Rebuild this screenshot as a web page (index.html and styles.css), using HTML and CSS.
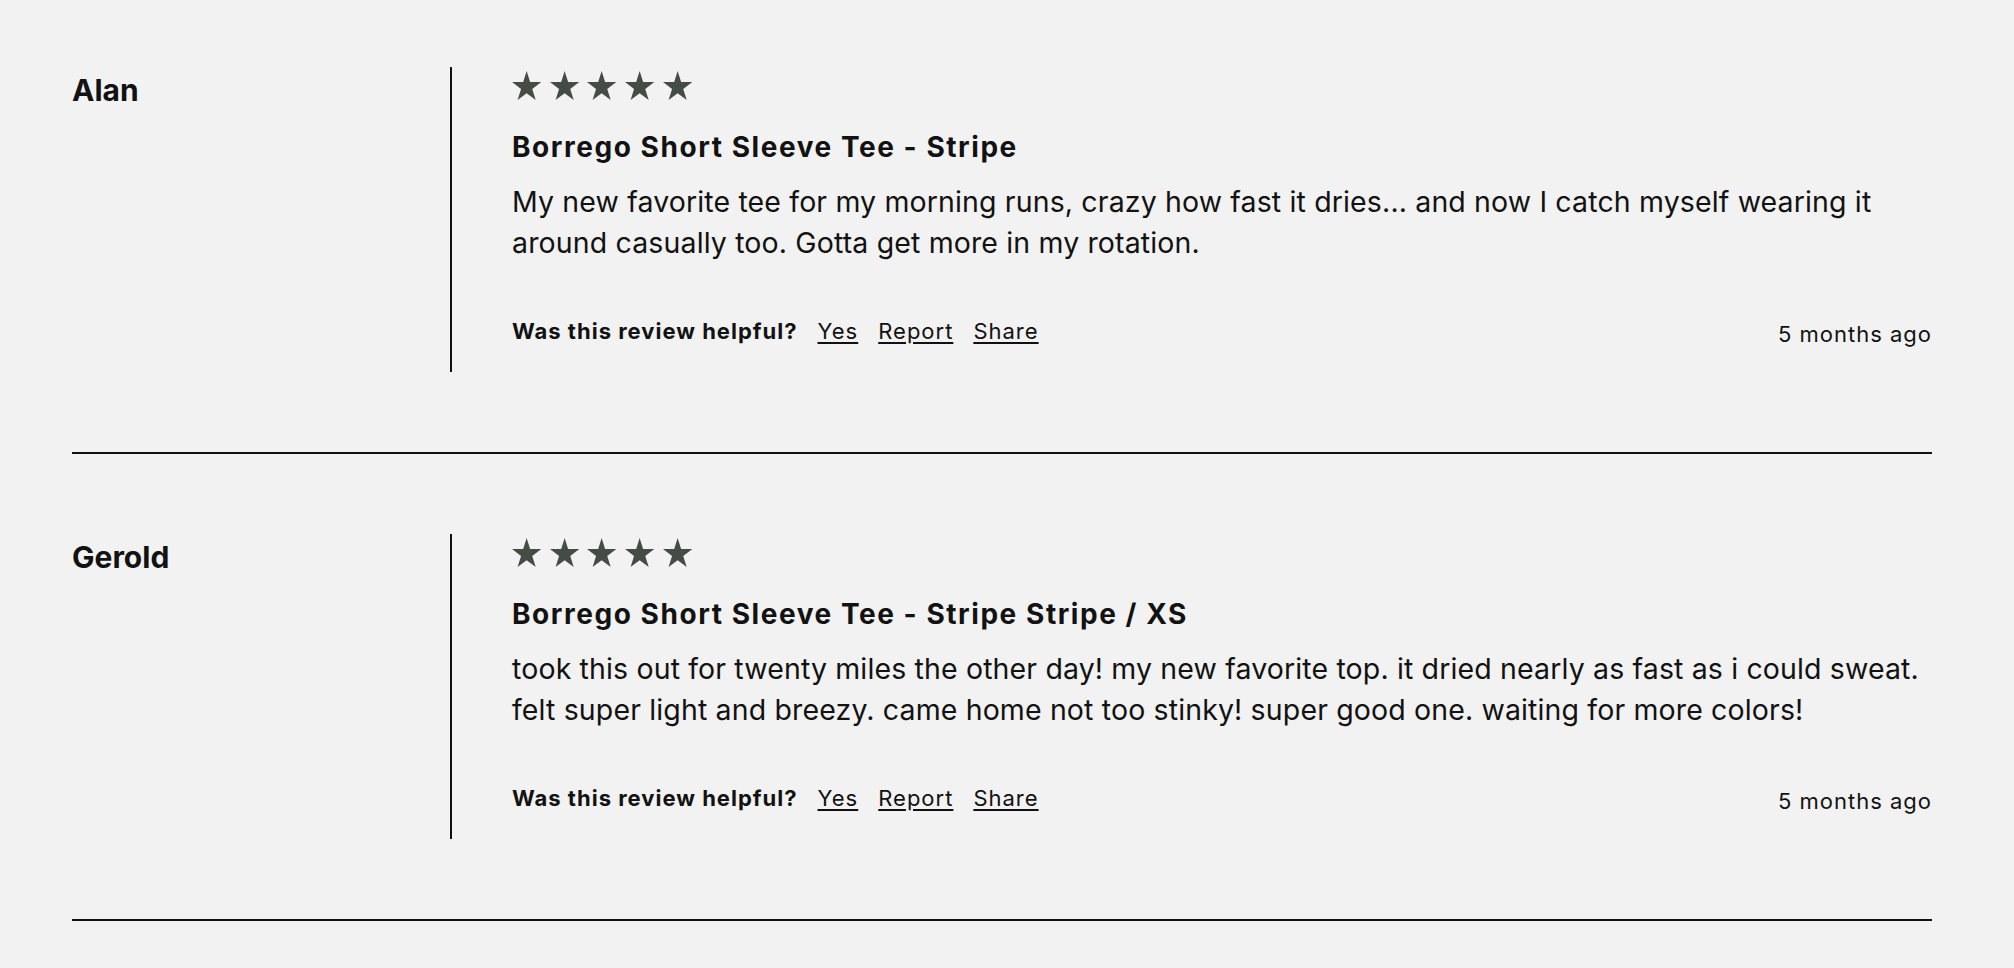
FILE: index.html
```html
<!DOCTYPE html>
<html lang="en">
<head>
<meta charset="utf-8">
<title>Reviews</title>
<link rel="stylesheet" href="styles.css">
</head>
<body>
<main class="reviews">
  <article class="review">
    <div class="author">Alan</div>
    <div class="content">
      <div class="stars" aria-label="5 out of 5 stars">
        <svg class="star" viewBox="0 0 100 95.1" preserveAspectRatio="none"><polygon points="50,0 61.8,36.3 100,36.3 69.1,58.8 80.9,95.1 50,72.7 19.1,95.1 30.9,58.8 0,36.3 38.2,36.3"/></svg>
        <svg class="star" viewBox="0 0 100 95.1" preserveAspectRatio="none"><polygon points="50,0 61.8,36.3 100,36.3 69.1,58.8 80.9,95.1 50,72.7 19.1,95.1 30.9,58.8 0,36.3 38.2,36.3"/></svg>
        <svg class="star" viewBox="0 0 100 95.1" preserveAspectRatio="none"><polygon points="50,0 61.8,36.3 100,36.3 69.1,58.8 80.9,95.1 50,72.7 19.1,95.1 30.9,58.8 0,36.3 38.2,36.3"/></svg>
        <svg class="star" viewBox="0 0 100 95.1" preserveAspectRatio="none"><polygon points="50,0 61.8,36.3 100,36.3 69.1,58.8 80.9,95.1 50,72.7 19.1,95.1 30.9,58.8 0,36.3 38.2,36.3"/></svg>
        <svg class="star" viewBox="0 0 100 95.1" preserveAspectRatio="none"><polygon points="50,0 61.8,36.3 100,36.3 69.1,58.8 80.9,95.1 50,72.7 19.1,95.1 30.9,58.8 0,36.3 38.2,36.3"/></svg>
      </div>
      <h3 class="title">Borrego Short Sleeve Tee - Stripe</h3>
      <p class="body">My new favorite tee for my morning runs, crazy how fast it dries... and now I catch myself wearing it around casually too. Gotta get more in my rotation.</p>
      <div class="footer">
        <div class="helpful">
          <span class="question">Was this review helpful?</span>
          <a href="#" class="action">Yes</a>
          <a href="#" class="action">Report</a>
          <a href="#" class="action">Share</a>
        </div>
        <span class="date">5 months ago</span>
      </div>
    </div>
  </article>
  <article class="review">
    <div class="author">Gerold</div>
    <div class="content">
      <div class="stars" aria-label="5 out of 5 stars">
        <svg class="star" viewBox="0 0 100 95.1" preserveAspectRatio="none"><polygon points="50,0 61.8,36.3 100,36.3 69.1,58.8 80.9,95.1 50,72.7 19.1,95.1 30.9,58.8 0,36.3 38.2,36.3"/></svg>
        <svg class="star" viewBox="0 0 100 95.1" preserveAspectRatio="none"><polygon points="50,0 61.8,36.3 100,36.3 69.1,58.8 80.9,95.1 50,72.7 19.1,95.1 30.9,58.8 0,36.3 38.2,36.3"/></svg>
        <svg class="star" viewBox="0 0 100 95.1" preserveAspectRatio="none"><polygon points="50,0 61.8,36.3 100,36.3 69.1,58.8 80.9,95.1 50,72.7 19.1,95.1 30.9,58.8 0,36.3 38.2,36.3"/></svg>
        <svg class="star" viewBox="0 0 100 95.1" preserveAspectRatio="none"><polygon points="50,0 61.8,36.3 100,36.3 69.1,58.8 80.9,95.1 50,72.7 19.1,95.1 30.9,58.8 0,36.3 38.2,36.3"/></svg>
        <svg class="star" viewBox="0 0 100 95.1" preserveAspectRatio="none"><polygon points="50,0 61.8,36.3 100,36.3 69.1,58.8 80.9,95.1 50,72.7 19.1,95.1 30.9,58.8 0,36.3 38.2,36.3"/></svg>
      </div>
      <h3 class="title">Borrego Short Sleeve Tee - Stripe Stripe / XS</h3>
      <p class="body">took this out for twenty miles the other day! my new favorite top. it dried nearly as fast as i could sweat. felt super light and breezy. came home not too stinky! super good one. waiting for more colors!</p>
      <div class="footer">
        <div class="helpful">
          <span class="question">Was this review helpful?</span>
          <a href="#" class="action">Yes</a>
          <a href="#" class="action">Report</a>
          <a href="#" class="action">Share</a>
        </div>
        <span class="date">5 months ago</span>
      </div>
    </div>
  </article>
</main>
</body>
</html>
```

FILE: styles.css
```css
html, body {
  margin: 0;
  padding: 0;
  background: #f2f2f2;
}

body {
  font-family: Inter, "Liberation Sans", Arial, sans-serif;
  color: #121212;
}

.reviews {
  padding: 67px 82px 0 72px;
}

.review {
  display: flex;
  padding-bottom: 80px;
  border-bottom: 2px solid #111;
}

.review + .review {
  padding-top: 80px;
}

.author {
  width: 378px;
  flex: none;
  font-size: 30px;
  font-weight: 700;
  line-height: 36px;
  padding-top: 5px;
}

.content {
  flex: 1;
  min-width: 0;
  border-left: 2px solid #111;
  padding-left: 60px;
  padding-bottom: 23px;
}

.stars {
  display: flex;
  gap: 8.4px;
  padding-top: 4px;
}

.star {
  width: 29.3px;
  height: 29px;
  fill: #454c46;
  display: block;
}

.title {
  margin: 29px 0 0;
  font-size: 28px;
  font-weight: 700;
  line-height: 36px;
  letter-spacing: 1.55px;
}

.body {
  margin: 16px 0 0;
  font-size: 28.5px;
  font-weight: 400;
  line-height: 41px;
  letter-spacing: 0.14px;
}

.footer {
  margin-top: 53px;
  display: flex;
  justify-content: space-between;
  align-items: flex-start;
}

.helpful {
  display: flex;
  gap: 20px;
  font-size: 22px;
  line-height: 30px;
}

.question {
  font-weight: 700;
  letter-spacing: 1px;
}

.action {
  color: #111;
  text-decoration: underline;
  text-underline-offset: 3px;
  letter-spacing: 1px;
}

.date {
  font-size: 22px;
  line-height: 30px;
  padding-top: 3px;
  letter-spacing: 1px;
}
```
